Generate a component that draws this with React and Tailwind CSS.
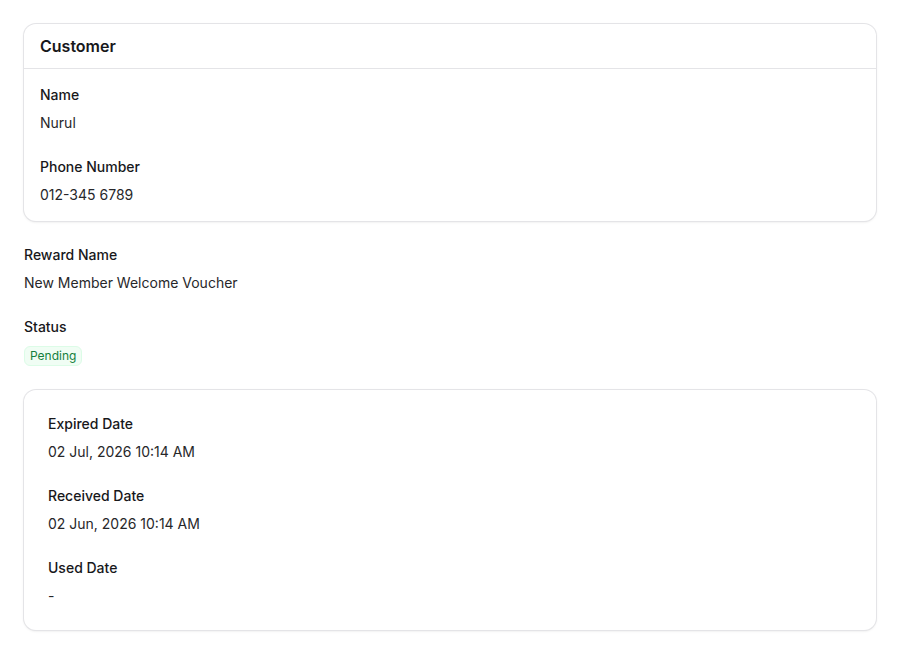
const Field = ({ label, value }) => (
  <div className="flex flex-col gap-2">
    <p className="text-sm font-medium leading-5 text-[#18181b]">{label}</p>
    <div className="text-sm leading-5 text-[#27272a]">{value}</div>
  </div>
);

export default function App() {
  return (
    <div className="min-h-screen bg-white p-6 font-['Inter',sans-serif]">
      <div className="flex flex-col gap-6">
        {/* Customer card */}
        <div className="rounded-xl bg-white shadow-sm ring-1 ring-[#e4e4e7]">
          <div className="border-b border-[#e4e4e7] px-4 py-2.5">
            <h2 className="text-base font-semibold leading-6 text-[#18181b]">Customer</h2>
          </div>
          <div className="flex flex-col gap-6 p-4">
            <Field label="Name" value="Nurul" />
            <Field label="Phone Number" value="012-345 6789" />
          </div>
        </div>

        <Field label="Reward Name" value="New Member Welcome Voucher" />

        <Field
          label="Status"
          value={
            <span className="inline-flex h-5 items-center rounded-md border border-[#dcfce7] bg-[#f0fdf4] px-[5px] text-xs leading-4 text-[#15803d]">
              Pending
            </span>
          }
        />

        {/* Dates card */}
        <div className="flex flex-col gap-6 rounded-xl bg-white p-6 shadow-sm ring-1 ring-[#e4e4e7]">
          <Field label="Expired Date" value="02 Jul, 2026 10:14 AM" />
          <Field label="Received Date" value="02 Jun, 2026 10:14 AM" />
          <Field label="Used Date" value="-" />
        </div>
      </div>
    </div>
  );
}
